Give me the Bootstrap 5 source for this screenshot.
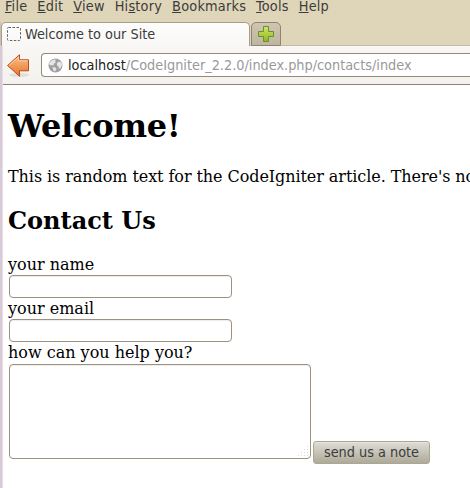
<!DOCTYPE html>
<html lang="en">
<head>
  <meta charset="UTF-8" />
  <meta name="viewport" content="width=device-width, initial-scale=1.0"/>
  <title>Welcome to our Site</title>
  <link rel="stylesheet" href="https://cdn.jsdelivr.net/npm/bootstrap@5.3.0/dist/css/bootstrap.min.css" />
  <style>
    body {
      height: 100vh;
      color: #000;
      font-family: "DejaVu Serif", serif;
      font-size: 16px;
      line-height: 19px;
    }

    .desktop-edge {
      width: 2px;
      background-color: #d8cad6;
      border-top: 45px solid #cdbfae;
    }

    .browser {
      min-width: 0;
      border-left: 1px solid #e6dee5;
    }

    .chrome-ui {
      font-family: "DejaVu Sans Condensed", "DejaVu Sans", sans-serif;
      font-stretch: condensed;
      font-size: 14.33px;
      line-height: 16px;
      color: #3c3c3c;
    }

    .menu-bar {
      height: 22px;
      margin-left: -3px;
      padding-left: 5px;
      background-color: #dfd6b9;
      gap: 10px;
      line-height: 13px;
      letter-spacing: .22px;
    }

    .tab-strip {
      height: 24px;
      margin-left: -2px;
      background-color: #dfd6b9;
      box-shadow: inset 0 -1px #c8bb9f;
    }

    .page-tab {
      width: 249px;
      padding: 0 0 1px 5px;
      gap: 4px;
      border: 1px solid #a79d8b;
      border-bottom: 0;
      border-radius: 5px 5px 0 0;
      background: linear-gradient(#fdfdfc, #f8f7f5);
    }

    .new-tab {
      width: 30px;
      height: 24px;
      margin-left: 1px;
      border: 1px solid #8d8473;
      border-radius: 5px 5px 0 0;
      background: linear-gradient(#cfc5b0, #c0b59f);
    }

    .nav-tools {
      height: 39px;
      padding: 7px 0 0 3px;
      gap: 10px;
      border-bottom: 1px solid #8e8370;
      background: linear-gradient(#f8f7f5, #f3f2ee);
    }

    .address {
      height: 24px;
      padding-left: 6px;
      gap: 5px;
      border: 1px solid #958a74;
      border-right: 0;
      border-radius: 4px 0 0 4px;
      background-color: #fff;
      color: #999;
      white-space: nowrap;
    }

    .address b {
      color: #222;
      font-weight: normal;
    }

    .site {
      padding: 22px 0 0 5px;
      white-space: nowrap;
    }

    .site h1 {
      font-size: 32px;
      line-height: 38px;
      letter-spacing: -.3px;
      margin-bottom: 22px;
    }

    .site p {
      letter-spacing: -.07px;
    }

    .site h2 {
      font-size: 24px;
      line-height: 28px;
      margin: 21px 0 20px;
    }

    .site label {
      height: 19px;
    }

    .field {
      border: 1px solid #9c907e;
      border-radius: 4px;
      padding: 0;
      background-color: #fff;
      box-shadow: inset 0 1px #efedea;
    }

    input.field {
      width: 223px;
      height: 23px;
      margin: 1px 0 1px 1px;
    }

    textarea.field {
      width: 302px;
      height: 95px;
      margin: 2px 0 0 1px;
      resize: none;
    }

    .grip {
      right: 2px;
      bottom: 2px;
    }

    .send {
      width: 117px;
      height: 23px;
      margin: 0 0 -5px 2px;
      padding: 0 0 1px;
      border: 1px solid #aaa795;
      border-radius: 3px;
      background: linear-gradient(#deddd5, #c6c3b7 50%, #aeaa99);
      box-shadow: inset 0 1px #e5e4dd;
    }
  </style>
</head>
<body class="d-flex overflow-hidden bg-white">
  <div class="desktop-edge flex-shrink-0"></div>
  <div class="browser flex-grow-1">
    <header class="chrome-ui">
      <nav class="menu-bar d-flex">
        <span><u>F</u>ile</span>
        <span><u>E</u>dit</span>
        <span><u>V</u>iew</span>
        <span>Hi<u>s</u>tory</span>
        <span><u>B</u>ookmarks</span>
        <span><u>T</u>ools</span>
        <span><u>H</u>elp</span>
      </nav>
      <div class="tab-strip d-flex">
        <div class="page-tab d-flex align-items-center">
          <svg width="14" height="14"><rect x=".5" y=".5" width="13" height="13" rx="1" fill="none" stroke="#666" stroke-dasharray="2.5 1.5"/></svg>
          <span>Welcome to our Site</span>
        </div>
        <div class="new-tab d-flex align-items-center justify-content-center">
          <svg width="16" height="16" viewBox="0 0 16 16">
            <defs><linearGradient id="plus" x2="0" y2="1"><stop stop-color="#d2e66a"/><stop offset="1" stop-color="#8db51e"/></linearGradient></defs>
            <path d="M5.5.5h5v5h5v5h-5v5h-5v-5h-5v-5h5z" fill="url(#plus)" stroke="#65932b"/>
          </svg>
        </div>
      </div>
      <div class="nav-tools d-flex">
        <svg class="flex-shrink-0" width="25" height="25" viewBox="0 0 25 25">
          <defs><linearGradient id="arrow" x2="0" y2="1"><stop stop-color="#f9c28a"/><stop offset="1" stop-color="#e8742a"/></linearGradient></defs>
          <ellipse cx="13" cy="22" rx="10" ry="2" fill="#e2dfda"/>
          <path d="M1.5 12.5 13.5 1.8v5h9v11h-9v5.4z" fill="url(#arrow)" stroke="#bd4a20" stroke-linejoin="round"/>
          <path d="M3 12.4 12.6 4v3.8h8.9" fill="none" stroke="#fbd0a5"/>
        </svg>
        <div class="address d-flex align-items-center flex-grow-1">
          <svg class="flex-shrink-0" width="15" height="15" viewBox="0 0 15 15">
            <circle cx="7.5" cy="7.5" r="7" fill="#a0a0a0"/>
            <path d="M1 5.5 3 3l3-1.5 2 .3-1 1.4 1 1-2 1.3-.5 2L3 7l-1 .6zM9 5l2-1.5 2.5 1L14 7l-1.4 3-1.6.8-.4-2.3L9 7.4zM4.5 9l3 .5 1 1.5L7 13.5l-1.5-.8z" fill="#e6e6e6"/>
          </svg>
          <span><b>localhost</b>/CodeIgniter_2.2.0/index.php/contacts/index</span>
        </div>
      </div>
    </header>

    <main class="site overflow-hidden pb-2">
      <h1 class="fw-bold">Welcome!</h1>
      <p class="mb-0">This is random text for the CodeIgniter article. There's not</p>
      <h2 class="fw-bold">Contact Us</h2>
      <form>
        <label class="d-block" for="name">your name</label>
        <input class="field d-block" type="text" id="name" name="name" />
        <label class="d-block" for="email">your email</label>
        <input class="field d-block" type="text" id="email" name="email" />
        <label class="d-block" for="message">how can you help you?</label>
        <div class="d-flex align-items-end">
          <div class="position-relative">
            <textarea class="field d-block" id="message" name="message"></textarea>
            <svg class="grip position-absolute" width="11" height="11"><path d="M9.5 0v11M6.5 3v8M3.5 6v5M.5 9v2" stroke="#ddd9d2" stroke-dasharray="1 2"/></svg>
          </div>
          <button class="send chrome-ui" type="submit">send us a note</button>
        </div>
      </form>
    </main>
  </div>

  <script src="https://cdn.jsdelivr.net/npm/bootstrap@5.3.0/dist/js/bootstrap.bundle.min.js"></script>
</body>
</html>
